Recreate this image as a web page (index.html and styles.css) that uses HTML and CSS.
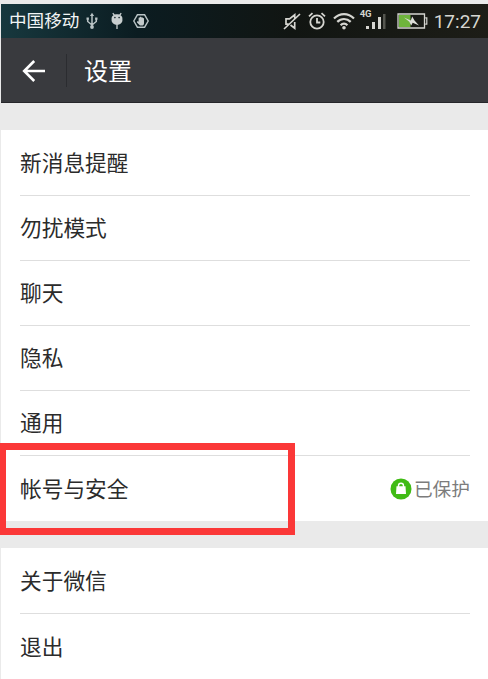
FILE: index.html
```
<!DOCTYPE html>
<html lang="zh-CN">
<head>
  <meta charset="UTF-8">
  <meta name="viewport" content="width=device-width, initial-scale=1.0">
  <title>设置</title>
  <link rel="stylesheet" href="styles.css">
</head>
<body>
  <div class="phone">
    <div class="status-bar">
      <span class="carrier">中国移动</span>
      <svg class="icon-usb" width="12" height="18" viewBox="0 0 12 18" fill="none" stroke="#b9c3c5" stroke-width="1.5">
        <path d="M6 3v11M1.7 7v2.500L6 13M10.3 7v2.500L6 13"/>
        <path d="M6 .8L8.1 4H3.9zM.5 5.500h2.4v2.300H.5zM9.1 5.500h2.4v2.300H9.1z" fill="#b9c3c5" stroke="none"/>
        <circle cx="6" cy="15" r="1.900" fill="#b9c3c5" stroke="none"/>
      </svg>
      <svg class="icon-robot" width="12" height="18" viewBox="0 0 12 18">
        <path d="M1.8 1.200L3.500 3.500M10.200 1.200L8.500 3.500M6 11v6" stroke="#c8cecf" stroke-width="1.300"/>
        <path d="M.6 6.500c0-2.500 2.400-4.200 5.400-4.200s5.400 1.700 5.400 4.200v1.700c0 2.700-2.400 4.500-5.400 4.500S.6 10.900.6 8.200z" fill="#c8cecf"/>
        <circle cx="3.900" cy="5.600" r=".8" fill="#0c1c20"/>
        <circle cx="8.100" cy="5.600" r=".8" fill="#0c1c20"/>
      </svg>
      <svg class="icon-hand" width="16" height="14" viewBox="0 0 16 14">
        <path d="M4.400.8h7.200L15.200 7l-3.600 6.200H4.400L.8 7z" fill="none" stroke="#b9c3c5" stroke-width="1.400"/>
        <path d="M5.600 3.800l1.100-.3.400-.8h1l.4.700 1-.1.400.7 1.100.2v5c0 1.500-.9 2.300-2.200 2.300H7L4 8.500V7.300l1.600.3z" fill="#c3cacb"/>
      </svg>
      <span class="spacer"></span>
      <svg class="icon-mute" width="18" height="17" viewBox="0 0 18 17" fill="none" stroke="#d6d6d1" stroke-width="1.700">
        <path d="M1 16L17 1M5.500 11.200H3V5.800h3.500l5.200-4v4M11.700 9v6.200L7.500 12"/>
      </svg>
      <svg class="icon-alarm" width="18" height="18" viewBox="0 0 18 18" fill="none" stroke="#d6d6d1" stroke-width="1.800">
        <circle cx="9" cy="10" r="6.700"/>
        <path d="M9 6v4.500h3.300M1 4.300L4.500 1.200M17 4.300L13.500 1.200"/>
      </svg>
      <svg class="icon-wifi" width="22" height="18" viewBox="0 0 22 18" fill="none" stroke="#d6d6d1" stroke-width="2.200">
        <path d="M1 6.500C6.800.6 15.200.6 21 6.500M4.300 9.900c3.900-3.900 9.500-3.900 13.400 0M7.600 13.200c2-2 4.800-2 6.800 0"/>
        <circle cx="11" cy="15.700" r="1.800" fill="#d6d6d1" stroke="none"/>
      </svg>
      <div class="signal">
        <span class="network">4G</span>
        <svg width="21" height="17" viewBox="0 0 21 17" fill="#d6d6d1">
          <path d="M1 13h3v3H1zM7 9h3v7H7zM13 4h3v12h-3z"/>
          <path d="M18 1h2.500v15H18z" fill="#55564f"/>
        </svg>
      </div>
      <svg class="icon-battery" width="31" height="16" viewBox="0 0 31 16">
        <path d="M1 1h26.500v14H1z" fill="none" stroke="#d6d6d1" stroke-width="1.300"/>
        <path d="M28.200 4.800h1.600v6.400h-1.600" fill="none" stroke="#d6d6d1" stroke-width="1.200"/>
        <path d="M2 2h11.500v12H2z" fill="#6fb43c"/>
        <path d="M7 4.500l6.800 3L15.200 3.500l2.300 4 4.500 5-6.300-2.800-1.500 2.800-1.900-3.700z" fill="#dedfd9"/>
      </svg>
      <span class="clock">17:27</span>
    </div>

    <div class="header">
      <svg class="back" width="24" height="24" viewBox="0 0 24 24" fill="none" stroke="#fff" stroke-width="2.600">
        <path d="M23 12H2.500M12.200 2L2.200 12l10 10"/>
      </svg>
      <span class="divider"></span>
      <h1>设置</h1>
    </div>

    <ul class="group">
      <li>新消息提醒</li>
      <li>勿扰模式</li>
      <li>聊天</li>
      <li>隐私</li>
      <li>通用</li>
      <li class="account">
        帐号与安全
        <span class="protected">
          <svg width="22" height="22" viewBox="0 0 22 22">
            <circle cx="11" cy="11" r="10.500" fill="#40bb15"/>
            <path d="M8.500 9V7.700a2.500 2.500 0 0 1 5 0V9" fill="none" stroke="#fff" stroke-width="1.400"/>
            <path d="M6.500 8.300h9l.5 7.700H6z" fill="#fff"/>
          </svg>
          已保护
        </span>
      </li>
    </ul>

    <ul class="group">
      <li>关于微信</li>
      <li>退出</li>
    </ul>
    <div class="highlight"></div>
  </div>
</body>
</html>
```

FILE: styles.css
```
* {
  box-sizing: border-box;
}

body {
  margin: 0;
  background: #f4f4f4;
  font-family: "Noto Sans CJK SC", sans-serif;
  color: #2b2b2b;
}

svg {
  display: block;
  flex-shrink: 0;
}

.phone {
  position: relative;
  height: 679px;
  padding: 4px 0 0 1px;
  overflow: hidden;
  background: #eaeaea;
}

.status-bar {
  display: flex;
  align-items: center;
  height: 34px;
  padding: 0 7px 0 8px;
  background: linear-gradient(90deg, #17383e 0, #0b1c21 28%, #111512 60%, #1d1d17 100%);
  color: #d6d6d1;
}

.carrier {
  padding-bottom: 2px;
  font-size: 17.6px;
  line-height: 32px;
  color: #f2f5f5;
}

.icon-usb {
  margin-left: 7px;
}

.icon-robot {
  margin-left: 13px;
}

.icon-hand {
  margin-left: 10px;
}

.spacer {
  flex: 1;
}

.icon-alarm {
  margin-left: 7px;
}

.icon-wifi {
  margin-left: 7px;
}

.signal {
  position: relative;
  margin-left: 10px;
}

.network {
  position: absolute;
  left: -5px;
  top: -4px;
  font: bold 9.5px/10px Roboto, sans-serif;
}

.icon-battery {
  margin-left: 11px;
}

.clock {
  margin-left: 6px;
  padding-top: 2px;
  font: 19px/32px Roboto, sans-serif;
}

.header {
  display: flex;
  align-items: center;
  height: 65px;
  padding: 1px 0 0 21px;
  background: #393a3e;
  border-bottom: 1px solid #26262a;
}

.divider {
  width: 1px;
  height: 33px;
  margin: 0 17px 0 20px;
  background: #2b2c30;
}

h1 {
  margin: 0;
  padding-bottom: 3px;
  font-size: 24px;
  font-weight: 400;
  line-height: 35px;
  color: #fff;
}

.group {
  margin: 27px 0 0;
  padding: 0 18px 0 19px;
  list-style: none;
  background: #fff;
}

.group li {
  display: flex;
  align-items: center;
  justify-content: space-between;
  height: 65px;
  padding-bottom: 3px;
  border-bottom: 1px solid #dedede;
  font-size: 21.7px;
}

.group li:first-child {
  height: 66px;
}

.group li:last-child {
  border-bottom: none;
}

.protected {
  display: flex;
  align-items: center;
  gap: 2px;
  font-size: 18.7px;
  color: #7c7c7c;
}

.protected svg {
  margin-top: 3px;
}

/* red frame around the account row */
.highlight {
  position: absolute;
  left: -1px;
  top: 443px;
  width: 296px;
  height: 92px;
  border: 7px solid #fb3838;
}
```
